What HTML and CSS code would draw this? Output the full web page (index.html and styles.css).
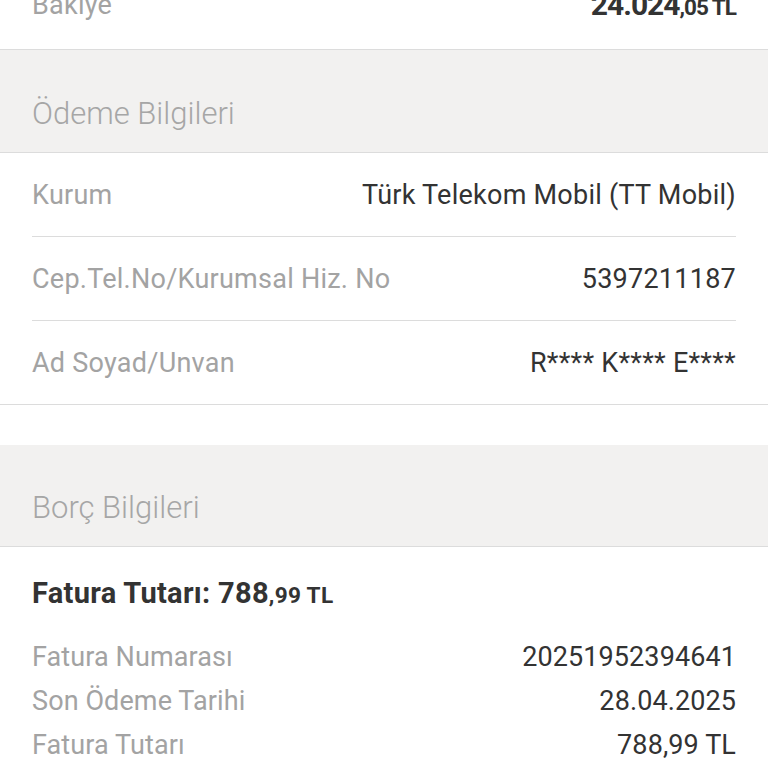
FILE: index.html
```html
<!DOCTYPE html>
<html lang="tr">
<head>
    <meta charset="UTF-8">
    <meta name="viewport" content="width=device-width, initial-scale=1.0">
    <title>Ödeme Bilgileri</title>
    <link rel="stylesheet" href="styles.css">
</head>
<body>
    <div class="balance">
        <span class="label">Bakiye</span>
        <span class="amount">24.024<small>,05 TL</small></span>
    </div>

    <div class="section-title">Ödeme Bilgileri</div>
    <div class="info-list">
        <div class="info-row">
            <span class="label">Kurum</span>
            <span class="value">Türk Telekom Mobil (TT Mobil)</span>
        </div>
        <div class="info-row">
            <span class="label">Cep.Tel.No/Kurumsal Hiz. No</span>
            <span class="value">5397211187</span>
        </div>
        <div class="info-row">
            <span class="label">Ad Soyad/Unvan</span>
            <span class="value">R**** K**** E****</span>
        </div>
    </div>

    <div class="section-title spaced">Borç Bilgileri</div>
    <div class="debt">
        <div class="debt-total">Fatura Tutarı: 788<small>,99 TL</small></div>
        <div class="debt-row">
            <span class="label">Fatura Numarası</span>
            <span class="value">20251952394641</span>
        </div>
        <div class="debt-row">
            <span class="label">Son Ödeme Tarihi</span>
            <span class="value">28.04.2025</span>
        </div>
        <div class="debt-row">
            <span class="label">Fatura Tutarı</span>
            <span class="value">788,99 TL</span>
        </div>
    </div>
</body>
</html>
```

FILE: styles.css
```css
body {
    margin: 0;
    background-color: #fff;
    font-family: 'Roboto', 'Noto Sans', sans-serif;
    color: #333;
    overflow: hidden;
}

.label {
    color: #a3a3a3;
}

.value {
    color: #333;
}

.balance {
    display: flex;
    justify-content: space-between;
    align-items: center;
    height: 89px;
    margin-top: -40px;
    padding: 0 32px;
    font-size: 27px;
    letter-spacing: 0.25px;
}

.amount {
    font-weight: 700;
    font-size: 30px;
    letter-spacing: -1px;
    color: #333;
}

.amount small {
    font-size: 0.75em;
}

.section-title {
    background-color: #f2f1f0;
    border-top: 1px solid #dcdcdc;
    border-bottom: 1px solid #dcdcdc;
    padding: 46px 32px 20px;
    line-height: 36px;
    font-size: 31px;
    font-weight: 300;
    color: #a6a6a6;
}

.section-title.spaced {
    margin-top: 40px;
    border-top: none;
    padding-top: 45px;
}

.info-list {
    border-bottom: 1px solid #dcdcdc;
}

.info-row {
    display: flex;
    justify-content: space-between;
    align-items: center;
    height: 83px;
    margin: 0 32px;
    font-size: 27px;
    letter-spacing: 0.25px;
    border-bottom: 1px solid #dcdcdc;
}

.info-row:last-child {
    border-bottom: none;
}

.debt {
    padding: 28px 32px 0;
}

.debt-total {
    line-height: 36px;
    font-size: 29px;
    font-weight: 700;
    letter-spacing: 0.3px;
    color: #333;
    margin-bottom: 21px;
}

.debt-total small {
    font-size: 0.78em;
}

.debt-row {
    display: flex;
    justify-content: space-between;
    line-height: 44px;
    font-size: 27px;
    letter-spacing: 0.1px;
}
```
